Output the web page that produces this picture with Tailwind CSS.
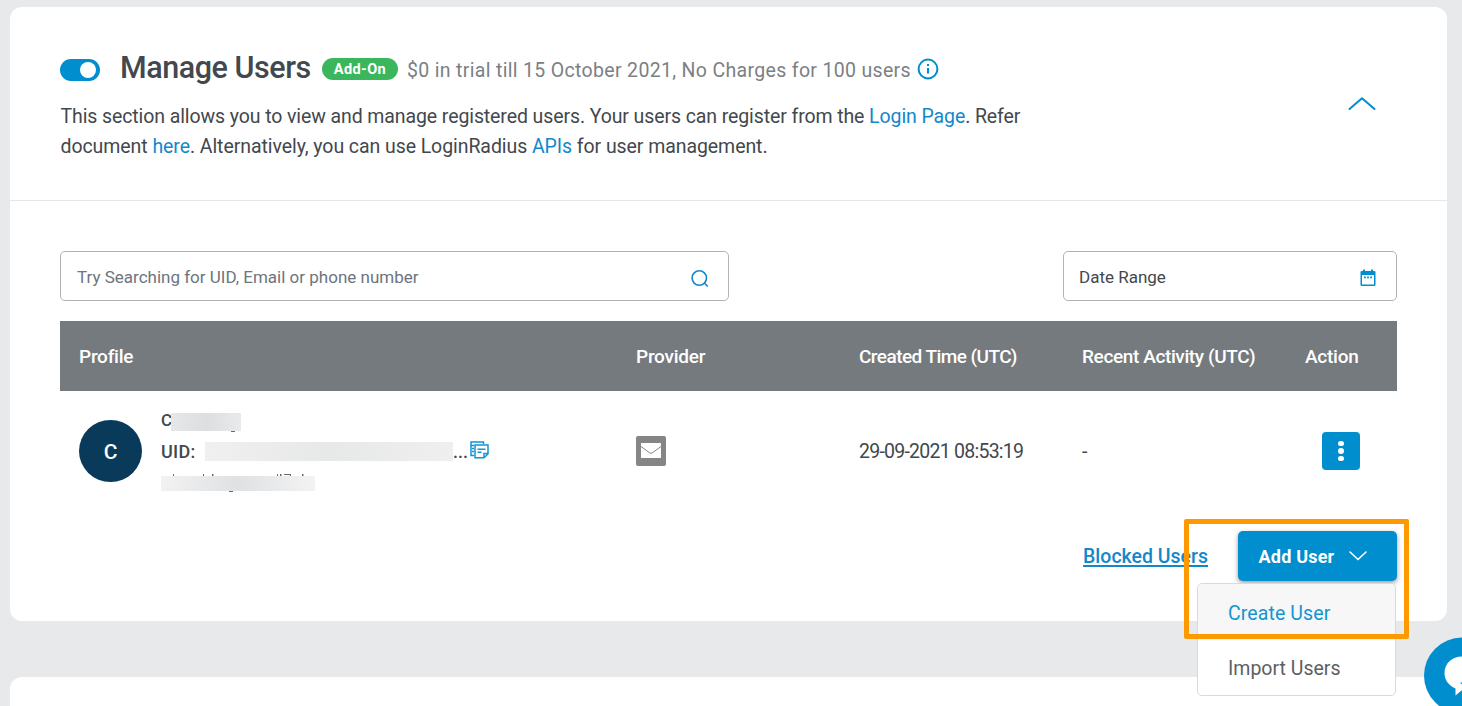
<!DOCTYPE html>
<html lang="en">
<head>
<meta charset="utf-8">
<title>Manage Users</title>
<script src="https://cdn.jsdelivr.net/npm/@tailwindcss/browser@4"></script>
</head>
<body class="relative h-[706px] overflow-hidden bg-[#e7e9eb] px-2.5 pt-[7px] pr-[15px] font-['Roboto',sans-serif] text-[#42484d] whitespace-nowrap">
<main class="flex h-[614px] flex-col rounded-xl bg-white">
  <header class="flex h-[194px] justify-between border-b border-[#e4e6e8] pl-[50px]">
    <div>
      <div class="mt-[41px] flex h-[42px] items-center">
        <div class="mt-[2px] flex h-[22px] w-10 items-center justify-end rounded-full bg-[#008ecf] pr-[4.5px]"><span class="size-4 rounded-full bg-white"></span></div>
        <h1 class="-mt-[3px] ml-[20px] w-[192px] text-[30.5px] leading-[42px] font-medium tracking-[-0.45px]">Manage Users</h1>
        <span class="ml-[10px] h-[22px] w-[76px] rounded-full bg-[#3ab65c] pt-px text-center text-[14.5px] leading-[22px] font-bold tracking-[0.4px] text-white">Add-On</span>
        <span class="mt-[4px] ml-[9px] w-[510px] text-[19.5px] leading-[30px] tracking-[0.33px] text-[#7b8084]">$0 in trial till 15 October 2021, No Charges for 100 users</span>
        <svg class="size-[22px]" viewBox="0 0 22 22" fill="none" stroke="#008ecf" stroke-width="2"><circle cx="11" cy="11" r="9.4"/><path d="M11 10v5.5M11 6v2"/></svg>
      </div>
      <p class="mt-[12px] pl-[0.5px] text-[19.5px] leading-[30px] tracking-[-0.1px]">This section allows you to view and manage registered users. Your users can register from the <a class="text-[#1288cb]">Login Page</a>. Refer<br><span class="tracking-[-0.07px]">document <a class="text-[#1288cb]">here</a>. Alternatively, you can use LoginRadius <a class="text-[#1288cb]">APIs</a> for user management.</span></p>
    </div>
    <svg class="mt-[88px] mr-[70px] h-4 w-[30px]" viewBox="0 0 30 16" fill="none" stroke="#008ecf" stroke-width="2" stroke-linecap="round" stroke-linejoin="round"><path d="M2.5 14 15 3.2 27.5 14"/></svg>
  </header>

  <section class="px-[50px] pt-[50px]">
    <div class="flex justify-between">
      <div class="flex h-[50px] w-[669px] items-center justify-between rounded-[5px] border border-[#b0b3b6] pr-[18px] pl-4">
        <span class="mt-[3px] text-[17px] text-[#6c757d]">Try Searching for UID, Email or phone number</span>
        <svg class="mt-[5px] size-5" viewBox="0 0 20 20" fill="none" stroke="#1288cb" stroke-width="1.6"><circle cx="9.3" cy="9" r="7.2"/><path d="m14.3 14 3.5 3.5"/></svg>
      </div>
      <div class="flex h-[50px] w-[334px] items-center justify-between rounded-[5px] border border-[#b0b3b6] pr-[20px] pl-[15px]">
        <span class="mt-[3px] text-[17px]">Date Range</span>
        <svg class="mt-[4px] h-[18px] w-4" viewBox="0 0 16 18" fill="#008ecf"><path fill-rule="evenodd" d="M3 .5h2V2h6V.5h2V2h1.2q1.3 0 1.3 1.3v12.4q0 1.3-1.3 1.3H1.8Q.5 17 .5 15.7V3.3Q.5 2 1.8 2H3ZM2 6v9.5h12V6Z"/><path d="M4 7.5h1.8v1.8H4zM7.1 7.5h1.8v1.8H7.1zM10.2 7.5H12v1.8h-1.8z"/></svg>
      </div>
    </div>

    <div class="mt-5 grid h-[70px] grid-cols-[557px_223px_223px_223px_1fr] items-center bg-[#757a7e] pt-[2px] pl-[19px] text-[19px] font-medium text-white">
      <span class="tracking-[-0.25px]">Profile</span>
      <span class="tracking-[-0.25px]">Provider</span>
      <span class="tracking-[-0.55px]">Created Time (UTC)</span>
      <span class="tracking-[-0.38px]">Recent Activity (UTC)</span>
      <span class="tracking-[-0.25px]">Action</span>
    </div>

    <div class="grid h-[120px] grid-cols-[557px_223px_223px_223px_1fr] items-center pl-[19px] text-[19.5px]">
      <div class="flex items-center">
        <div class="flex h-[62px] w-[63px] items-center justify-center rounded-[50%] bg-[#093a59] pt-[3px] text-[21px] font-medium text-white">C</div>
        <div class="ml-[19px] text-[18px] font-medium">
          <div class="flex h-[30px] items-center">
            <span class="w-[10px] text-[17px]">C</span>
            <span class="relative mt-[2px] h-[18px] w-[70px] bg-linear-to-r from-[#e6e7e9] via-[#dcdee0] to-[#e9eaeb]"><i class="absolute bottom-[-1px] left-[60px] h-px w-1 bg-[#666b70]"></i></span>
          </div>
          <div class="flex h-[30px] items-center">
            <span class="w-[44px] tracking-[0.3px]">UID:</span>
            <span class="h-[19px] w-[248px] bg-linear-to-r from-[#f0f0f0] via-[#e7e8e8] to-[#efefef]"></span>
            <span class="w-[17px]">...</span>
            <svg class="-mt-[3px] h-[18px] w-[19px]" viewBox="0 0 19 18" fill="none" stroke="#1594d2" stroke-width="1.5"><path d="M13.500 3V1H1v13.500h3M1 4.500h3M2 7.500h2M2 10.500h2"/><path d="M5 4h13v9l-4 3.800H5ZM18 12.500h-4v4M7.500 8.200h8M7.500 11.300h4"/></svg>
          </div>
          <div class="relative h-[30px]">
            <span class="absolute top-[10px] left-0 h-[15px] w-[154px] bg-linear-to-r from-[#f2f2f2] via-[#dfe1e3] to-[#f3f3f3]"></span>
            <svg class="absolute top-[7px] left-px h-5 w-[150px]" viewBox="0 0 150 20" fill="#666b70"><path d="M11 1h1v2h-1zM41 1h1v2h-1zM50 1h1.500v2H50zM115 1h1v2h-1zM118 1h1.500v2H118zM122 1h7v1h-7zM128 2h1v1h-1zM140 1h1.500v2H140zM67 18h4v1h-4z"/></svg>
          </div>
        </div>
      </div>
      <svg class="size-[30px]" viewBox="0 0 30 30"><rect width="30" height="30" rx="2" fill="#858585"/><path d="M5 7h20v15H5z" fill="#fff"/><path d="m5 10.500 8.500 6.200q1.500 1.100 3 0L25 10.500" fill="none" stroke="#858585" stroke-width="1"/></svg>
      <span class="mt-[2px] tracking-[-0.75px]">29-09-2021 08:53:19</span>
      <span class="mt-[2px]">-</span>
      <div class="ml-[17px] flex size-[38px] flex-col items-center justify-center gap-[2px] rounded-[4px] bg-[#008ecf]"><i class="size-[5.5px] rounded-full bg-white"></i><i class="size-[5.5px] rounded-full bg-white"></i><i class="size-[5.5px] rounded-full bg-white"></i></div>
    </div>

    <div class="mt-5 flex h-[50px] items-center justify-end">
      <a class="mt-[2px] mr-[30px] text-[19.5px] font-medium text-[#1288cb] underline decoration-2 underline-offset-[2px]">Blocked Users</a>
      <div class="relative">
        <button class="flex h-[50px] w-[159px] items-center rounded-[5px] bg-[#008ecf] pl-[20.5px] text-[18px] font-bold tracking-[0.2px] text-white shadow-[0_2px_5px_rgba(0,0,0,0.4)]">Add User
          <svg class="ml-[14px] h-3 w-5" viewBox="0 0 20 12" fill="none" stroke="#fff" stroke-width="1.6" stroke-linecap="round"><path d="m2 2 8 7.500L18 2"/></svg>
        </button>
        <div class="absolute top-[52px] right-px z-10 h-[113px] w-[199px] overflow-hidden rounded-[5px] border border-[#d8dadc] bg-white text-[19.5px] tracking-[0.1px]">
          <div class="flex h-14 items-center bg-[#f7f7f7] pt-[3px] pl-[30px] text-[#1594d2]">Create User</div>
          <div class="flex h-[55px] items-center pt-[2px] pl-[30px] tracking-[0px] text-[#5b6064]">Import Users</div>
        </div>
      </div>
    </div>
  </section>
</main>
<section class="mt-14 h-[29px] rounded-t-xl bg-white"></section>
<div class="absolute top-[519px] left-[1184px] z-20 h-[120px] w-[225px] rounded-[2px] border-[5px] border-[#ff9900]"></div>
<svg class="absolute top-[637px] left-[1424px] h-[69px] w-[38px]" viewBox="0 0 38 69"><circle cx="38" cy="38.500" r="38" fill="#008ecf"/><path d="M38 19.500c-10 0-17.500 7-17.500 16.500 0 7 4 12.500 11 15.500v7l6-5H38Z" fill="#fff"/><path d="M36 45.500h2v2z" fill="#008ecf"/></svg>
</body>
</html>
